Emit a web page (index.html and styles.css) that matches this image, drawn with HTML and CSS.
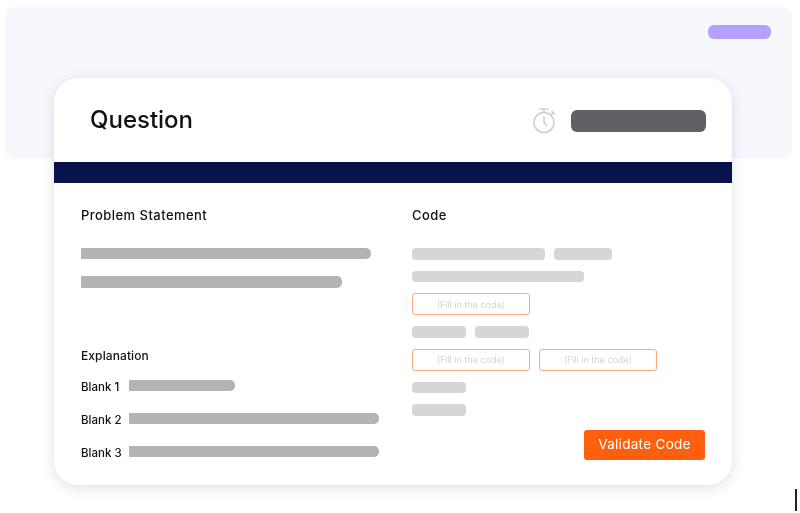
FILE: index.html
```html
<!DOCTYPE html>
<html lang="en">
<head>
<meta charset="utf-8">
<title>Question</title>
<link rel="stylesheet" href="styles.css">
</head>
<body>
<div class="page">
  <div class="backdrop"><span class="pill"></span></div>
  <main class="card">
    <header class="card-head">
      <h1 class="title">Question</h1>
      <div class="timer">
        <svg class="timer-icon" width="26" height="28" viewBox="0 0 26 28" fill="none" stroke="#cfcfcf" stroke-width="1.6" stroke-linecap="round" stroke-linejoin="round">
          <circle cx="13" cy="15.5" r="10"/>
          <path d="M9 2h8M13 2v3.5M20.5 7.5l2-2M21 4.5l2.5 2.5M13 10v5.5l2.5 3"/>
        </svg>
        <span class="timer-bar"></span>
      </div>
    </header>
    <div class="band"></div>
    <div class="card-body">
      <section class="col-left">
        <h2 class="heading">Problem Statement</h2>
        <span class="bar bar-dark w-290 first"></span>
        <span class="bar bar-dark w-261 second"></span>
        <h3 class="sub">Explanation</h3>
        <div class="blank"><span class="blank-label">Blank 1</span><span class="bar bar-dark w-106"></span></div>
        <div class="blank"><span class="blank-label">Blank 2</span><span class="bar bar-dark w-250"></span></div>
        <div class="blank"><span class="blank-label">Blank 3</span><span class="bar bar-dark w-250"></span></div>
      </section>
      <section class="col-right">
        <h2 class="heading code-heading">Code</h2>
        <div class="line"><span class="bar bar-light w-133"></span><span class="bar bar-light w-58"></span></div>
        <div class="line"><span class="bar bar-light w-172"></span></div>
        <div class="line"><span class="fill">(Fill in the code)</span></div>
        <div class="line"><span class="bar bar-light w-54"></span><span class="bar bar-light w-54"></span></div>
        <div class="line wide"><span class="fill">(Fill in the code)</span><span class="fill">(Fill in the code)</span></div>
        <div class="line"><span class="bar bar-light w-54"></span></div>
        <div class="line"><span class="bar bar-light w-54"></span></div>
        <button class="validate" type="button">Validate Code</button>
      </section>
    </div>
  </main>
  <span class="caret"></span>
</div>
</body>
</html>
```

FILE: styles.css
```css
* { box-sizing: border-box; }
html, body { margin: 0; padding: 0; background: #fff; }
body { width: 800px; height: 513px; overflow: hidden; font-family: "Inter", "Liberation Sans", sans-serif; color: #111; }
.page { position: relative; width: 800px; height: 513px; padding-top: 7px; filter: blur(0.4px); }

.backdrop { height: 151px; margin: 0 8px 0 5px; padding: 17.5px 21px 0 0; display: flex; justify-content: flex-end; align-items: flex-start; background: #f7f7fe; border-radius: 9px; }
.pill { width: 63px; height: 14.5px; border-radius: 6px; background: #b5a1fb; }

.card { position: relative; width: 678px; margin: -80px 0 0 54px; background: #fff; border-radius: 24px; box-shadow: 0 3px 14px rgba(40, 40, 70, 0.14); overflow: hidden; }
.card-head { height: 84px; padding: 0 26px 0 36px; display: flex; align-items: center; justify-content: space-between; }
.title { margin: 0; font-size: 24px; line-height: 30px; font-weight: 500; letter-spacing: 0; }
.timer { display: flex; align-items: center; gap: 13.5px; margin-top: 2px; }
.timer-icon { display: block; }
.timer-bar { width: 135.5px; height: 21.5px; border-radius: 6px; background: #616064; }
.band { height: 21px; background: #07134a; }

.card-body { display: flex; padding: 22px 27px 25px; }
.col-left { width: 331px; flex: none; display: flex; flex-direction: column; align-items: flex-start; }
.col-right { flex: 1; display: flex; flex-direction: column; align-items: flex-start; gap: 11px; }

.heading { margin: 0; font-size: 13px; line-height: 20px; font-weight: 500; letter-spacing: 0.45px; }
.code-heading { margin-bottom: 12px; }
.sub { margin: 58px 0 14px; font-size: 12px; line-height: 20px; font-weight: 500; letter-spacing: 0.1px; }

.bar { display: block; height: 11.5px; flex: none; }
.bar-dark { background: #b3b3b3; border-radius: 0 5px 5px 0; }
.bar-light { background: #d6d6d6; border-radius: 4px; }
.first { margin-top: 22.5px; }
.second { margin-top: 17px; }
.w-290 { width: 290px; }
.w-261 { width: 261px; }
.w-106 { width: 106px; }
.w-250 { width: 250px; }
.w-133 { width: 133px; }
.w-172 { width: 172px; }
.w-58 { width: 58px; }
.w-54 { width: 54px; }

.blank { display: flex; align-items: flex-start; width: 100%; margin-bottom: 19px; height: 14px; }
.blank:last-child { margin-bottom: 0; }
.blank-label { width: 48px; flex: none; font-size: 11.5px; line-height: 15px; font-weight: 500; }

.line { display: flex; gap: 9px; }
.line.wide { gap: 9.5px; }
.fill { width: 117.5px; height: 22px; display: flex; align-items: center; justify-content: center; font-size: 9px; color: #d4d4d4; background: #fff; border: 1.5px solid #fda882; border-radius: 3px; }

.validate { align-self: flex-end; width: 121px; height: 30px; margin: 3px 0 0; padding: 0 0 2px; border: 0; border-radius: 3px; background: #ff6010; color: #fff; font-family: inherit; font-size: 13.5px; font-weight: 400; letter-spacing: 0.3px; }

.caret { position: absolute; left: 795px; top: 489px; width: 2px; height: 22px; background: #222; }
```
